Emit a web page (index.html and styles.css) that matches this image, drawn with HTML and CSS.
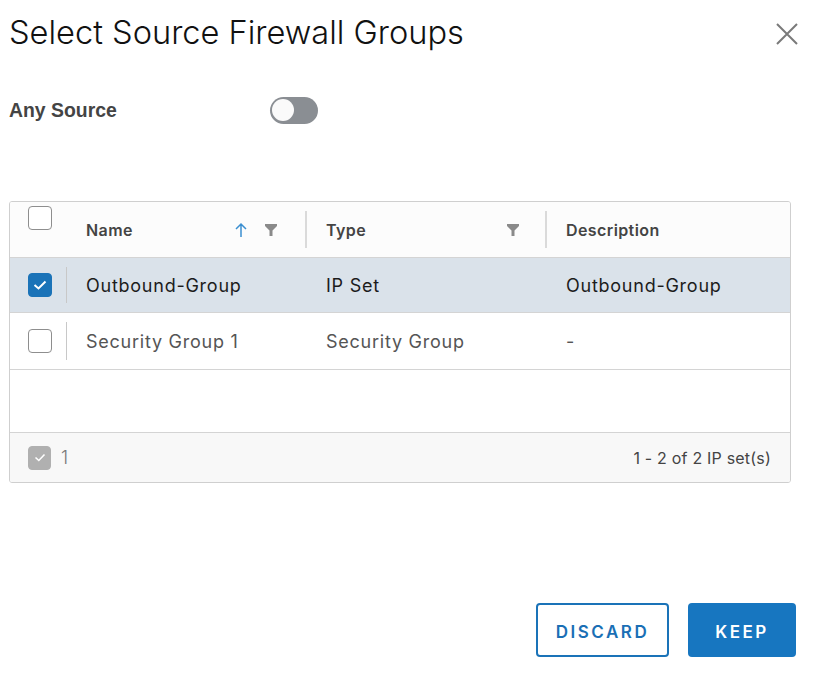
FILE: index.html
```html
<!DOCTYPE html>
<html>
<head>
<meta charset="utf-8">
<link rel="stylesheet" href="styles.css">
</head>
<body>
<div class="dialog">
  <div class="head">
    <h1 class="title">Select Source Firewall Groups</h1>
    <button class="close" aria-label="Close">
      <svg width="22" height="22" viewBox="0 0 22 22"><path d="M1 1L21 21M21 1L1 21" stroke="#7a7a7a" stroke-width="2" fill="none"/></svg>
    </button>
  </div>
  <div class="any">
    <span class="any-label">Any Source</span>
    <span class="toggle"><span class="knob"></span></span>
  </div>
  <div class="table">
    <div class="row header">
      <div class="cell chk top"><span class="box"></span></div>
      <div class="cell hname">
        <span>Name</span>
        <span class="icons">
          <svg class="sort" width="12" height="16" viewBox="0 0 12 16"><path d="M6 15V2M1 7L6 2L11 7" stroke="#3b8fd0" stroke-width="1.5" fill="none"/></svg>
          <svg class="filter" width="12" height="12" viewBox="0 0 12 12"><path d="M0 0H12V2L7.5 6.5V12H4.5V6.5L0 2Z" fill="#8a8a8a"/></svg>
        </span>
      </div>
      <div class="cell htype sep">
        <span>Type</span>
        <svg class="filter" width="12" height="12" viewBox="0 0 12 12"><path d="M0 0H12V2L7.5 6.5V12H4.5V6.5L0 2Z" fill="#8a8a8a"/></svg>
      </div>
      <div class="cell hdesc sep"><span>Description</span></div>
    </div>
    <div class="row data selected">
      <div class="cell chk"><span class="box checked"><svg width="14" height="10" viewBox="0 0 14 10"><path d="M1.5 5L5.5 8.5L12.5 1.5" stroke="#fff" stroke-width="2" fill="none"/></svg></span><span class="vline"></span></div>
      <div class="cell">Outbound-Group</div>
      <div class="cell">IP Set</div>
      <div class="cell">Outbound-Group</div>
    </div>
    <div class="row data muted">
      <div class="cell chk"><span class="box"></span><span class="vline"></span></div>
      <div class="cell">Security Group 1</div>
      <div class="cell">Security Group</div>
      <div class="cell">-</div>
    </div>
    <div class="empty"></div>
    <div class="foot">
      <div class="foot-left"><span class="box disabled"><svg width="12" height="9" viewBox="0 0 12 9"><path d="M1.5 4.5L4.8 7.5L10.5 1.5" stroke="#fff" stroke-width="1.6" fill="none"/></svg></span><span class="count">1</span></div>
      <div class="foot-right">1 - 2 of 2 IP set(s)</div>
    </div>
  </div>
  <div class="actions">
    <button class="btn outline">DISCARD</button>
    <button class="btn solid">KEEP</button>
  </div>
</div>
</body>
</html>
```
FILE: styles.css
```css
* { box-sizing: border-box; }
html, body { margin: 0; padding: 0; background: #fff; }
body { font-family: Inter, "Noto Sans", sans-serif; color: #222; }
.dialog { width: 818px; height: 677px; padding: 0 0 0 9px; display: flex; flex-direction: column; }
.head { display: flex; justify-content: space-between; align-items: flex-start; padding-top: 12px; padding-right: 20px; }
.title { margin: 0; font-size: 32.6px; font-weight: 300; line-height: 40px; color: #111; letter-spacing: 0; }
.close { border: 0; background: none; padding: 0; margin-top: 11px; width: 22px; height: 22px; }
.any { display: flex; align-items: center; margin-top: 44px; height: 28px; }
.any-label { font-family: "Liberation Sans", Arial, sans-serif; font-weight: 700; font-size: 19.4px; color: #444; width: 261px; }
.toggle { width: 48px; height: 27px; border-radius: 14px; background: #8a8e93; position: relative; display: inline-block; }
.knob { position: absolute; left: 2px; top: 2.5px; width: 22px; height: 22px; border-radius: 50%; background: #fafafa; }
.table { margin-top: 77px; width: 782px; border: 1.5px solid #cfcfcf; border-radius: 3px; display: flex; flex-direction: column; overflow: hidden; }
.row { display: grid; grid-template-columns: 56px 239px 240px 1fr; border-bottom: 1.5px solid #d4d4d4; }
.header { height: 56px; background: #fcfcfc; }
.cell { display: flex; align-items: center; padding-left: 20px; font-size: 18px; letter-spacing: 0.75px; }
.row .cell.chk { padding-left: 18px; position: relative; }
.chk.top { align-items: flex-start; padding-top: 4px; }
.header .cell { font-weight: 600; font-size: 16px; color: #444; letter-spacing: 0.4px; }
.hname { justify-content: space-between; padding-right: 28px; }
.icons { display: flex; align-items: center; gap: 18px; }
.htype { justify-content: space-between; padding-right: 26px; }
.header .sep { position: relative; }
.header .sep::before { content: ""; position: absolute; left: 0; top: 9px; bottom: 9px; width: 1.5px; background: #dadada; }
.htype, .hdesc { padding-left: 21px !important; }
.data { height: 55px; }
.data .cell:nth-child(2) { padding-left: 20px; }
.data .cell:nth-child(3) { padding-left: 21px; }
.data .cell:nth-child(4) { padding-left: 21px; }
.selected { background: #dae2ea; color: #1c1c1c; }
.muted { color: #555; height: 57px; }
.vline { position: absolute; right: -1px; top: 9px; bottom: 9px; width: 1.5px; background: #c8c8c8; }
.box { width: 24px; height: 24px; border: 1.8px solid #8e8e8e; border-radius: 4px; background: #fff; display: inline-flex; align-items: center; justify-content: center; }
.box.checked { background: #1a73b8; border-color: #1a73b8; }
.box.disabled { background: #b0b0b0; border-color: #b0b0b0; width: 23px; height: 24px; }
.empty { height: 63px; border-bottom: 1.5px solid #d4d4d4; }
.foot { height: 49px; background: #f8f8f8; display: flex; justify-content: space-between; align-items: center; padding: 0 19px 0 18px; }
.foot-left { display: flex; align-items: center; gap: 10px; }
.count { font-size: 18px; color: #777; font-weight: 300; }
.foot-right { font-size: 16px; color: #444; letter-spacing: 0.2px; }
.actions { margin-top: auto; margin-bottom: 20px; display: flex; justify-content: flex-end; gap: 19px; padding-right: 22px; }
.btn { height: 54px; border-radius: 4px; font-family: Inter, sans-serif; font-size: 17px; font-weight: 600; letter-spacing: 2.5px; cursor: pointer; padding: 4px 0 0; }
.outline { width: 133px; background: #fff; color: #1a6fb5; border: 2px solid #1a73b8; }
.solid { width: 108px; background: #1776c0; color: #fff; border: 0; }
```
